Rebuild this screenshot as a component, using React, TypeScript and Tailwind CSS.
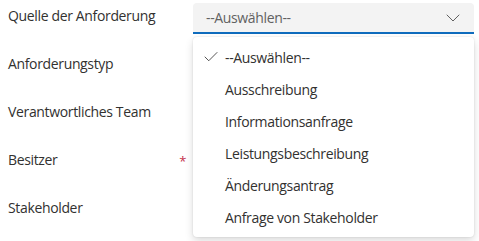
import { Check, ChevronDown } from "lucide-react";

const labels = [
  "Quelle der Anforderung",
  "Anforderungstyp",
  "Verantwortliches Team",
  "Besitzer",
  "Stakeholder",
];

const options = [
  "--Auswählen--",
  "Ausschreibung",
  "Informationsanfrage",
  "Leistungsbeschreibung",
  "Änderungsantrag",
  "Anfrage von Stakeholder",
];

export default function App() {
  return (
    <div
      className="relative w-[479px] h-[241px] overflow-hidden bg-white text-[14px] tracking-[-0.35px] text-[#323130]"
      style={{ fontFamily: '"Open Sans", "Noto Sans", sans-serif' }}
    >
      <div className="flex flex-col">
        {labels.map((label, i) => (
          <div key={label} className="flex h-12">
            <div className="w-[193px] pl-2 pr-[7px] pt-[6px] leading-5 flex items-start justify-between">
              <span>{label}</span>
              {i === 3 && <span className="text-[#c4314b] text-[13px] leading-5 pt-[1px]">*</span>}
            </div>
            <div className="flex-1 pr-[5px]">
              {i === 0 && (
                <div className="mt-[3px] h-[31px] bg-[#f3f3f3] rounded-t-[4px] border-b-2 border-[#0f6cbd] flex items-center justify-between pl-[13px] pr-[9px]">
                  <span className="text-[#616161]">--Auswählen--</span>
                  <ChevronDown size={24} strokeWidth={1} className="text-[#616161]" />
                </div>
              )}
              {i === 3 && (
                <div className="mt-[5px] h-[30px] bg-[#f5f5f5] rounded-[4px] border border-[#e0e0e0]" />
              )}
            </div>
          </div>
        ))}
      </div>

      <div className="absolute left-[193px] top-[37px] w-[281px] rounded-[4px] bg-white py-1 shadow-[0_0_2px_rgba(0,0,0,0.12),0_4px_8px_rgba(0,0,0,0.14)]">
        {options.map((opt, i) => (
          <div key={opt} className="h-8 flex items-center">
            <div className="w-8 flex justify-end pr-[5px]">
              {i === 0 && <Check size={18} strokeWidth={1.1} className="text-[#323130]" />}
            </div>
            <span>{opt}</span>
          </div>
        ))}
      </div>
    </div>
  );
}
